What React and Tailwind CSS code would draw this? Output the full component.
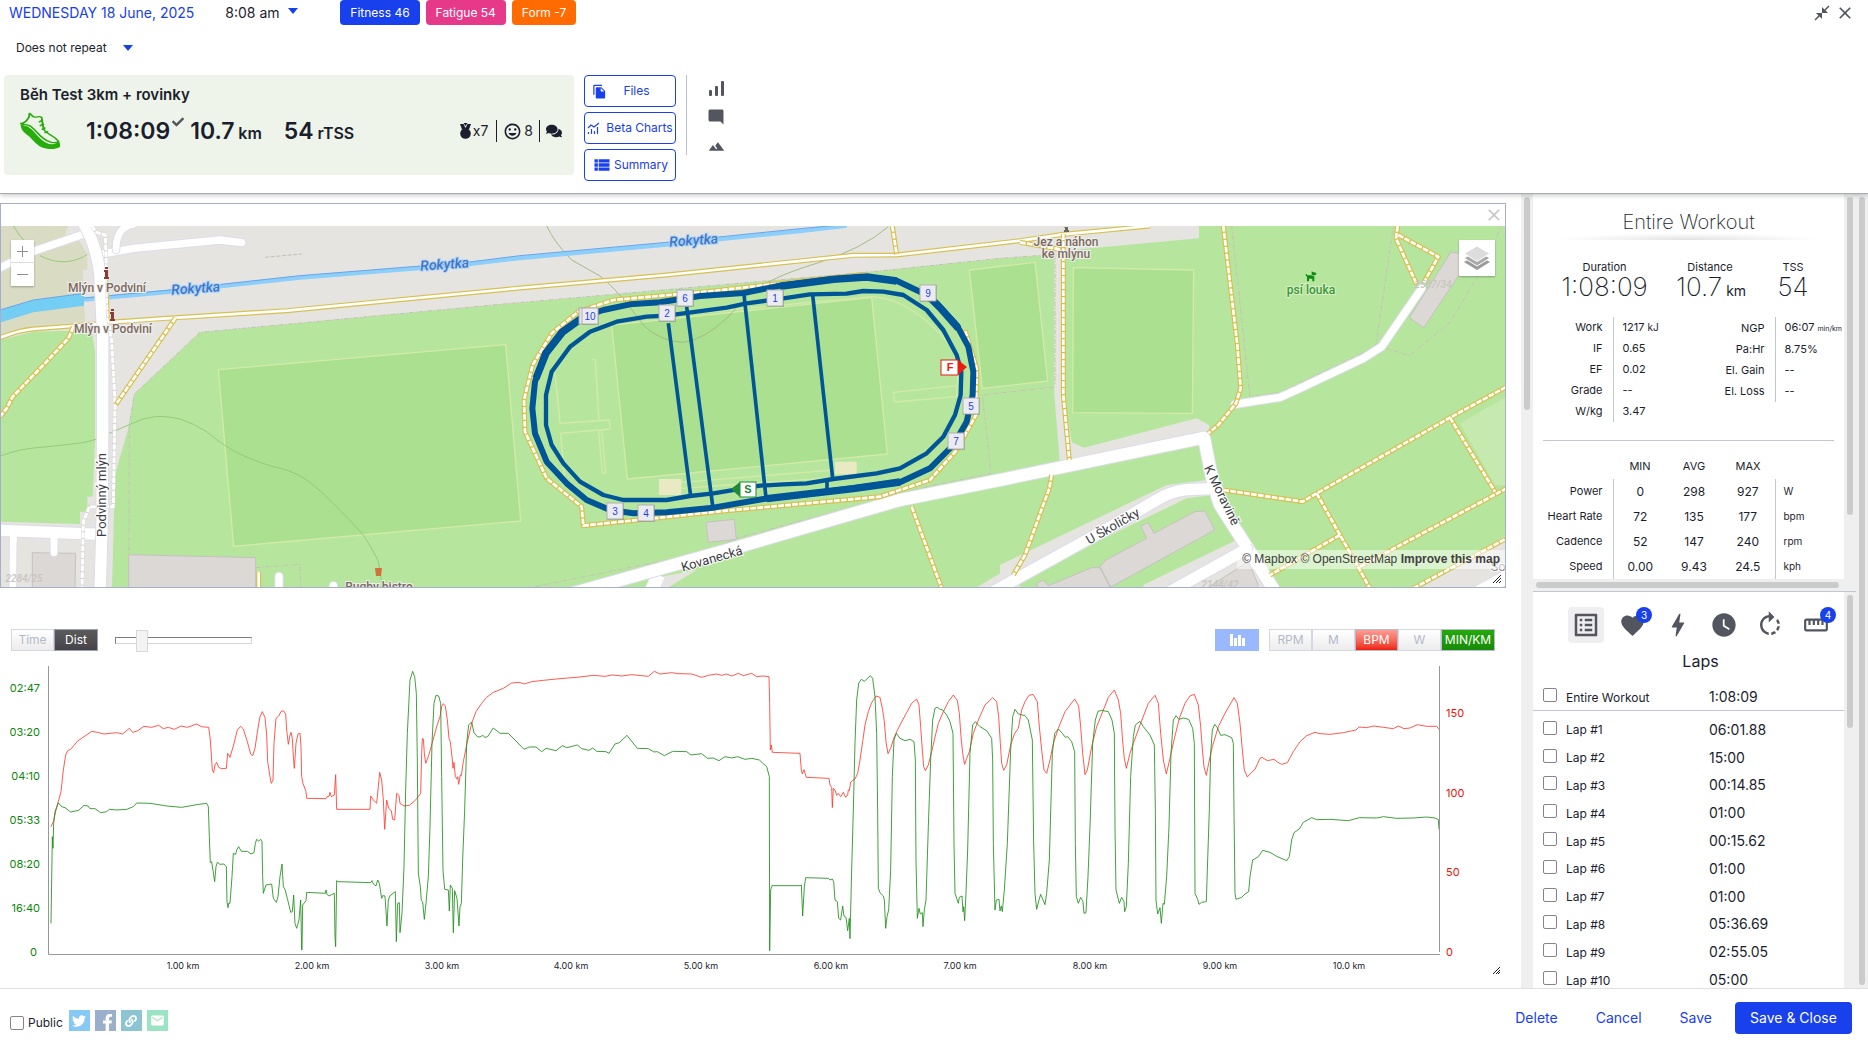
import {
  MdBolt,
  MdClose,
  MdCloseFullscreen,
  MdEmail,
  MdFavorite,
  MdFileCopy,
  MdFilterHdr,
  MdListAlt,
  MdModeComment,
  MdOutlineMood,
  MdRotateRight,
  MdStraighten,
  MdViewList,
  MdWatchLater,
} from "react-icons/md"
import { FaCheck, FaComments, FaDog, FaFacebookF, FaLink, FaTwitter } from "react-icons/fa"

const laps = [
  ["Lap #1", "06:01.88"],
  ["Lap #2", "15:00"],
  ["Lap #3", "00:14.85"],
  ["Lap #4", "01:00"],
  ["Lap #5", "00:15.62"],
  ["Lap #6", "01:00"],
  ["Lap #7", "01:00"],
  ["Lap #8", "05:36.69"],
  ["Lap #9", "02:55.05"],
  ["Lap #10", "05:00"],
]

const statsLeft = [
  ["Work", "1217", "kJ"],
  ["IF", "0.65"],
  ["EF", "0.02"],
  ["Grade", "--"],
  ["W/kg", "3.47"],
]

const statsRight = [
  ["NGP", "06:07", "min/km"],
  ["Pa:Hr", "8.75%"],
  ["El. Gain", "--"],
  ["El. Loss", "--"],
]

const minMax = [
  ["Power", "0", "298", "927", "W"],
  ["Heart Rate", "72", "135", "177", "bpm"],
  ["Cadence", "52", "147", "240", "rpm"],
  ["Speed", "0.00", "9.43", "24.5", "kph"],
]

// samples are in thirds of a pixel, one chunk per window of the recording
const heartRate = [
  [0, "153,650 160,635 168,600 175,575 183,545 190,480 197,435 203,422 212,418 232,394 255,378 275,364 292,367 312,372 350,368 368,372 388,355 398,367 412,363 432,349 455,352 476,346 490,356 505,352 523,358 543,348 562,352 590,342 604,350 626,352 631,390 637,480 641,488 645,465 650,457 656,472 664,476 679,475 683,430 690,442 700,408 712,360 722,349 730,357 742,395 752,432 758,437 765,415 773,360 780,320 787,305 795,322 800,375 803,455 810,500 814,520 819,510 822,400 828,325 836,318 843,305 850,302 857,312 860,360 865,403 869,380 873,367 877,385 880,440 883,475 888,400 894,372 900,370 903,410 905,500 909,520 918,545 920,565 978,566 981,560 987,559 990,547 994,560 1003,555 1007,494 1010,598 1110,598 1112,558 1120,570 1130,580 1135,530 1139,487 1145,510 1150,570 1154,658 1160,570 1166,595 1174,602 1178,628 1184,630 1190,550 1197,556 1200,580 1212,588 1228,586 1245,572"],
  [1200, "55,560 62,550 65,430 67,385 70,387 73,430 77,460 85,440 95,405 110,350 120,320 125,290 130,281 136,288 142,330 147,385 151,395 157,450 159,475 162,457 166,500 171,507 173,500 176,523 181,495 184,497 190,455 200,405 215,340 228,305 245,280 260,262 280,247 310,235 335,219 358,217 373,222 395,215 430,211 470,207 540,201 580,196 615,199 637,195 665,198 695,194 745,199 763,184 780,192 815,188 835,191 875,192 905,202 925,196 950,192 965,196 980,192 995,198 1015,190 1030,197 1055,190 1070,200 1090,198 1107,200 1109,280 1111,420 1114,405 1117,427 1200,430 1204,480 1207,492 1212,479"],
  [2400, "19,502 87,505 90,525 95,532 97,593 100,535 105,540 110,556 115,550 122,560 130,547 137,562 143,555 145,540 148,542 152,516 165,507 173,490 180,450 188,395 195,345 205,305 215,278 228,258 240,262 248,300 253,335 258,395 264,431 272,415 283,380 300,345 335,280 350,267 357,285 362,350 367,420 371,470 376,482 385,465 395,425 403,390 415,340 430,305 445,275 460,255 472,272 478,310 483,380 488,430 494,463 500,445 508,425 520,370 535,330 555,285 578,263 590,275 596,320 601,400 605,460 611,481 620,465 632,405 643,372 655,355 665,300 675,275 687,256 699,253 712,275 718,350 725,420 732,480 740,490 750,450 760,400 775,355 795,305 824,267 836,288 842,350 848,430 855,494 862,480 875,410 890,350 910,300 925,262 943,240 955,270 962,310 968,395 973,445 979,475 990,430 1000,400 1020,345 1045,280 1065,256 1075,280 1082,370 1090,450 1099,492 1110,445 1122,390 1138,325 1155,280 1170,258"],
  [3540, "43,253 55,285 62,350 68,430 72,470 79,496 86,460 97,410 115,350 135,310 162,263 172,280 180,340 187,420 193,480 202,501 212,490 225,478 240,445 246,442 262,452 282,448 292,456 305,463 322,458 340,425 360,395 380,377 405,367 420,371 450,373 490,368 528,360 537,351 560,353 582,348 610,352 640,356 655,348 672,356 690,354 712,344 740,349 770,349 777,358"],
]

const pace = [
  [0, "153,940 157,680 159,715 161,640 165,605 175,578 185,590 195,593 212,606 236,601 252,586 264,588 270,596 285,596 302,608 320,605 328,598 350,600 380,598 400,590 410,579 450,580 500,588 545,592 590,584 620,580 625,590 628,680 631,758 635,755 644,815 648,770 652,757 660,763 672,762 679,770 681,875 684,893 686,880 690,880 696,800 700,730 707,733 710,720 716,710 724,724 742,724 753,732 762,728 766,700 770,688 776,693 782,688 786,695 788,800 790,850 798,825 815,822 820,865 829,877 834,860 840,800 846,762 850,830 855,838 862,865 872,907 877,905 881,855 885,940 890,955 897,930 902,870 905,1020 906,1020 908,885 918,872 920,847 976,850 978,840 981,853 987,858 1003,850 1005,980 1007,1010 1010,812 1014,815 1112,818 1116,812 1120,822 1128,828 1133,810 1138,820 1145,865 1148,857 1155,858 1161,948 1165,870 1170,857 1186,845 1189,995 1193,880 1198,878 1200,968 1206,910 1212,770 1217,540 1222,370 1230,210"],
  [1200, "38,184 44,200 49,250 52,450 55,790 61,830 64,872 68,875 73,928 78,880 85,800 90,650 96,400 102,280 108,256 116,258 122,280 125,500 129,780 134,838 145,840 148,903 151,825 157,835 160,968 164,842 171,865 177,948 180,890 184,880 188,750 194,600 200,400 206,345 215,336 222,368 232,380 240,381 248,376 255,382 263,380 280,354 300,370 325,370 345,390 372,418 388,411 408,411 425,425 438,415 468,422 487,407 500,413 532,405 545,416 567,421 578,414 590,424 618,425 627,430 645,402 658,398 681,376 712,415 745,416 762,426 772,425 793,437 818,424 860,425 873,435 905,431 922,445 940,444 957,452 975,440 995,444 1013,440 1035,448 1055,445 1078,450 1100,470 1108,500 1109,1022 1112,840 1116,827 1200,827 1204,825 1208,918 1213,830"],
  [2400, "17,803 85,805 90,810 97,807 101,815 105,870 112,875 116,925 122,930 128,888 132,918 138,922 143,962 148,925 150,986 155,780 160,600 165,400 170,270 176,220 184,208 193,214 211,197 218,205 225,260 230,370 233,600 235,835 240,848 250,858 253,870 257,955 261,920 266,900 272,780 277,500 282,390 289,370 300,385 315,392 330,388 342,395 346,450 348,750 352,925 357,895 361,912 367,908 369,950 373,900 378,870 385,650 392,450 398,330 405,295 412,291 418,297 428,300 440,315 450,335 459,370 462,700 465,850 475,880 478,862 486,858 489,905 491,890 494,932 498,850 503,720 510,430 518,345 526,335 540,350 560,362 575,385 578,450 580,700 585,900 589,870 597,868 600,903 604,888 607,905 613,840 622,700 632,420 638,320 645,298 655,312 675,317 685,330 697,390 701,700 705,850 710,898 717,870 722,853 735,884 740,850 748,750 757,430 764,370 775,357 787,370 796,382 803,380 815,395 824,425 826,700 829,860 835,880 842,862 849,875 852,910 858,908 864,800 870,650 878,400 886,330 894,304 905,301 925,305 936,330 943,370 945,650 948,840 958,880 965,862 972,875 974,905 979,890 985,760 992,500 1000,380 1006,345 1020,334 1030,350 1050,375 1063,405 1066,600 1068,870 1073,912 1080,893 1084,940 1089,880 1093,883 1100,800 1107,650 1113,430 1120,330 1128,317 1137,328 1150,324 1166,328 1178,355 1183,400 1185,830"],
  [3540, "45,850 53,868 57,883 65,877 77,875 79,875 83,750 88,600 92,430 97,360 104,343 112,353 122,376 135,374 155,383 160,400 162,600 165,850 168,868 185,862 195,852 206,845 210,800 218,750 235,740 248,721 270,727 290,739 320,752 328,740 335,690 342,668 358,657 370,637 395,623 410,629 450,628 505,632 538,623 590,624 610,620 650,625 700,624 740,621 765,624 775,629 777,658"],
]

function join(chunks) {
  return chunks
    .map(([dx, pts]) =>
      pts
        .split(" ")
        .map((p) => {
          const [x, y] = p.split(",")
          return `${Number(x) + dx},${y}`
        })
        .join(" "),
    )
    .join(" ")
}

const kmTicks = [
  [183, "1.00 km"],
  [312, "2.00 km"],
  [442, "3.00 km"],
  [571, "4.00 km"],
  [701, "5.00 km"],
  [831, "6.00 km"],
  [960, "7.00 km"],
  [1090, "8.00 km"],
  [1220, "9.00 km"],
  [1349, "10.0 km"],
]
const paceTicks = ["02:47", "03:20", "04:10", "05:33", "08:20", "16:40", "0"]
const bpmTicks = [
  [717, "150"],
  [797, "100"],
  [876, "50"],
  [956, "0"],
]

const markers = [
  ["10", 590, 316],
  ["6", 685, 298],
  ["2", 667, 313],
  ["1", 775, 298],
  ["9", 928, 293],
  ["5", 971, 406],
  ["7", 956, 441],
  ["3", 615, 511],
  ["4", 646, 513],
]

export default function App() {
  return (
    <div className="flex h-screen min-h-[600px] flex-col overflow-hidden bg-white font-['Inter',sans-serif] text-[#1b1e2e]">
      <Header />
      <div className="flex min-h-0 flex-1">
        <main className="min-w-0 flex-1 overflow-hidden pt-[9px]">
          <MapPanel />
          <ChartPanel />
        </main>
        <VScroll className="bg-[#efefef]" thumb="h-[213px]" />
        <Sidebar />
        <VScroll className="bg-[#efefef]" thumb="h-[788px]" />
      </div>
      <Footer />
    </div>
  )
}

function VScroll({ className = "", thumb }) {
  return (
    <div className={`w-3 shrink-0 overflow-hidden px-[3px] pt-[3px] ${className}`}>
      <div className={`w-1.5 rounded-full bg-[#cbcbcb] ${thumb}`} />
    </div>
  )
}

function Caret() {
  return <span className="border-x-[5px] border-t-[6px] border-x-transparent border-t-[#1840ed]" />
}

function Header() {
  return (
    <header className="relative z-10 h-[194px] shrink-0 border-b border-[#a9abb3] bg-white shadow-[0_1px_5px_rgba(0,0,0,0.25)]">
      <div className="flex h-[25px] items-center">
        <button className="ml-[9px] text-sm text-[#1840ed]">WEDNESDAY 18 June, 2025</button>
        <label className="ml-[31px] flex items-center">
          <select aria-label="Start time" className="appearance-none text-sm">
            <option>8:08 am</option>
          </select>
          <span className="-mt-1 ml-2 flex"><Caret /></span>
        </label>
        <div className="ml-[42px] flex gap-1.5 text-xs text-white">
          <span className="flex h-[25px] items-center rounded bg-[#1840ed] px-2.5">Fitness 46</span>
          <span className="flex h-[25px] items-center rounded bg-[#e6398a] px-2.5">Fatigue 54</span>
          <span className="flex h-[25px] items-center rounded bg-[#ff6b00] px-2.5">Form -7</span>
        </div>
        <div className="ml-auto flex items-center gap-1 pr-[13px] text-[#53565e]">
          <button aria-label="Shrink"><MdCloseFullscreen size={18} /></button>
          <button aria-label="Close"><MdClose size={20} /></button>
        </div>
      </div>
      <label className="ml-4 mt-[13px] flex h-5 w-fit items-center">
        <select aria-label="Repeat" className="appearance-none text-xs">
          <option>Does not repeat</option>
        </select>
        <span className="ml-4 flex"><Caret /></span>
      </label>

      <div className="mt-[17px] flex pl-1">
        <section className="h-[100px] w-[570px] rounded bg-[#eef4e9] px-4 pt-2.5">
          <h1 className="text-[15px] leading-5 font-semibold">Běh Test 3km + rovinky</h1>
          <div className="mt-[7px] flex items-center">
            <Shoe />
            <span className="ml-[26px] text-[23px] font-semibold">1:08:09</span>
            <FaCheck size={12} className="mb-[18px] ml-0.5 text-[#53565e]" />
            <span className="ml-1.5 text-[23px] font-semibold">
              10.7 <span className="-ml-0.5 text-base">km</span>
            </span>
            <span className="ml-[22px] text-[23px] font-semibold">
              54 <span className="-ml-0.5 text-base">rTSS</span>
            </span>
            <div className="-mr-2 ml-auto flex h-[22px] items-center text-sm">
              <Medal />
              <span className="ml-0.5 pr-2">x7</span>
              <span className="flex h-[22px] items-center gap-0.5 border-x border-[#1b1e2e] px-1.5">
                <MdOutlineMood size={19} /> 8
              </span>
              <FaComments size={16} className="mr-1 ml-1.5" />
            </div>
          </div>
        </section>
        <div className="ml-2.5 flex flex-col gap-[5px] text-[#1840ed]">
          <HeaderButton icon={<MdFileCopy size={15} />} gap="gap-4 pr-[18px]">Files</HeaderButton>
          <HeaderButton icon={<BetaChartIcon />} gap="gap-1.5">Beta Charts</HeaderButton>
          <HeaderButton icon={<MdViewList size={20} />} gap="gap-0.5">Summary</HeaderButton>
        </div>
        <div className="ml-2.5 flex h-20 flex-col items-center justify-between border-l border-[#b9bed0] pt-1.5 pl-5 text-[#53565e]">
          <button aria-label="Chart">
            <svg width="15" height="15" viewBox="0 0 15 15" fill="currentColor">
              <rect x="0" y="9" width="3" height="6" rx="1" />
              <rect x="6" y="5" width="3" height="10" rx="1" />
              <rect x="12" y="0" width="3" height="15" rx="1" />
            </svg>
          </button>
          <button aria-label="Comments"><MdModeComment size={18} /></button>
          <button aria-label="Map"><MdFilterHdr size={17} /></button>
        </div>
      </div>
    </header>
  )
}

function HeaderButton({ icon, gap, children }) {
  return (
    <button className={`flex h-8 w-[92px] items-center justify-center rounded border border-[#1840ed] text-xs whitespace-nowrap ${gap}`}>
      {icon}
      {children}
    </button>
  )
}

function BetaChartIcon() {
  return (
    <svg width="13" height="13" viewBox="0 0 13 13" fill="none" stroke="#1840ed" className="shrink-0">
      <path d="M1 6 4 3 7 5 12 1M1.500 12V10M4.500 12V7M7.500 12V9M10.500 12V5" strokeWidth="1.200" />
    </svg>
  )
}

function Medal() {
  return (
    <svg width="11" height="16" viewBox="0 0 11 16" fill="currentColor">
      <path d="M0 1H3.500L5.500 5 7.500 1H11L9 6.500H2Z" />
      <path d="M3.500 0H7.500L5.500 3Z" />
      <circle cx="5.500" cy="10.500" r="5.300" />
    </svg>
  )
}

function Shoe() {
  return (
    <svg width="40" height="38" viewBox="0 0 85 112" preserveAspectRatio="none" className="shrink-0">
      <path
        d="M2 34C9 34 16 24 19 15C21 9 18 4 21 4C25 8 26 14 31 15C36 16 41 10 46 16C48 30 47 42 52 54C58 66 76 72 82 88C72 94 58 88 48 76C36 62 30 48 20 40C14 36 6 38 2 34Z"
        fill="none"
        stroke="#27ad0b"
        strokeWidth="4"
      />
      <path d="M2 32C0 44 4 56 14 66C26 78 34 96 46 104C56 110 74 112 84 104C87 98 86 92 82 88C72 100 58 96 48 84C34 68 28 52 18 44C10 40 4 40 2 32Z" fill="#27ad0b" />
      <path d="M40 30 47 24M42 41 51 35M46 52 54 46M52 62 60 57" stroke="#27ad0b" strokeWidth="4" />
    </svg>
  )
}

/* ---------- map ---------- */

function Trail({ d, solid }) {
  return (
    <>
      <path d={d} stroke="#d8c04e" strokeWidth={15} />
      <path d={d} stroke="#fff" strokeWidth={8} strokeDasharray={solid ? undefined : "17 4"} />
    </>
  )
}

function Road({ d, w }) {
  return (
    <>
      <path d={d} stroke="#dcdde9" strokeWidth={w + 6} strokeLinecap="round" />
      <path d={d} stroke="#fff" strokeWidth={w} strokeLinecap="round" />
    </>
  )
}

function Boundary({ d }) {
  return <path d={d} stroke="#c9bfb8" strokeWidth={3} strokeDasharray="14 5 4 5" />
}

function Building({ points }) {
  return <polygon points={points} fill="#dcd8d5" stroke="#c6c1be" strokeWidth={3} />
}

function Field({ points }) {
  return <polygon points={points} fill="#aae08f" stroke="#d3eaa8" strokeWidth={4} />
}

function MapPanel() {
  return (
    <section className="relative mr-[15px] border border-[#a5b0c8]">
      <div className="flex h-[22px] items-center justify-end pr-px">
        <button aria-label="Hide map" className="text-[#c6c6c6]"><MdClose size={20} /></button>
      </div>
      <MapDrawing />
      <div className="absolute top-9 left-2.5 flex w-[23px] flex-col bg-white text-[#8e8e8e] shadow-[0_1px_2px_rgba(0,0,0,0.3)]">
        <button aria-label="Zoom in" className="flex h-[23px] items-center justify-center border-b border-[#ddd]">
          <svg width="11" height="11" viewBox="0 0 11 11" stroke="currentColor"><path d="M5.500 0V11M0 5.500H11" /></svg>
        </button>
        <button aria-label="Zoom out" className="flex h-[23px] items-center justify-center">
          <svg width="11" height="11" viewBox="0 0 11 11" stroke="currentColor"><path d="M0 5.500H11" /></svg>
        </button>
      </div>
      <button aria-label="Layers" className="absolute top-9 right-2.5 flex size-9 items-center justify-center bg-white shadow-[0_1px_2px_rgba(0,0,0,0.3)]">
        <svg width="26" height="26" viewBox="0 0 26 26">
          <path d="M0 17 13 10 26 17 13 25Z" fill="#9a9a9a" />
          <path d="M0 13 13 6 26 13 13 21Z" fill="#a9a9a9" stroke="#fff" />
          <path d="M0 8.500 13 1 26 8.500 13 16.500Z" fill="#dcdcdc" stroke="#fff" />
        </svg>
      </button>
      <p className="absolute right-0 bottom-[18px] bg-white/50 px-[5px] font-['Liberation_Sans',sans-serif] text-xs leading-[19px] text-[#404040]">
        <a href="#mapbox">© Mapbox</a> <a href="#osm">© OpenStreetMap</a>{" "}
        <a href="#improve" className="font-bold">Improve this map</a>
      </p>
      <div className="absolute right-1 bottom-1"><Grip /></div>
    </section>
  )
}

function Grip() {
  return (
    <svg width="8" height="8" viewBox="0 0 8 8" stroke="#222" className="block">
      <path d="M0 8 8 0M3 8 8 3M6 8 8 6" />
    </svg>
  )
}

function MapDrawing() {
  return (
    <svg viewBox="1 226 1504 361" className="block w-full font-['Roboto',sans-serif]" fill="none">
      <rect x="0" y="220" width="1510" height="370" fill="#b6e69e" />
      <g transform="translate(0 195) scale(0.333333)" strokeLinejoin="round">
        {/* built-up ground and park */}
        <path
          d="M0 90H3597V130L3215 165 3165 178 3000 190 2600 232 2100 275 1500 328 600 412 403 597 385 700 345 840 336 1180H0Z"
          fill="#e5e4e1"
        />
        <path d="M0 90H205L195 120 240 140 262 180V225H248L255 380 100 395 0 425Z" fill="#d9dcc3" />
        <path d="M0 435 100 410 275 405 285 470V740L278 905H262V950H240V987L0 980Z" fill="#b6e69e" />
        <path d="M3163 178H3198L3192 600 3215 742 3252 758 3590 670 3627 690V730L3180 805 3163 600Z" fill="#e5e4e1" />
        <path d="M3000 1110 3500 870 3620 855 3640 900 3560 910 3000 1180Z" fill="#e5e4e1" />
        <path d="M2925 1180 3060 1100V1180ZM3430 1170 3720 1030 3800 1180H3430ZM4260 1180 4520 1020V1180ZM2000 1180 2090 1125 1960 1150 1930 1180Z" fill="#e5e4e1" />
        <path d="M4380 685 4520 605V870H4485Z" fill="#c5e9ae" />

        {/* playing fields */}
        <Field points="655,524 1517,449 1562,978 701,1054" />
        <Field points="1835,390 2615,308 2662,777 1882,852" />
        <Field points="2908,225 3105,202 3143,558 2947,580" />
        <Field points="3220,218 3581,225 3577,655 3218,653" />
        <g stroke="#d3eaa8" strokeWidth="4">
          <path d="M1665 535 1680 685 1828 675 1830 702 1682 715 1695 860M1775 493H1786L1797 678M1805 705 1817 833 1807 835 1796 708M2680 592 2870 572V605L2684 621ZM2025 360 2615 305M2615 305C2720 310 2800 390 2850 450C2868 480 2876 530 2872 570M2045 862 2500 825M2045 880 2500 848" />
        </g>
        <path d="M1977 852H2044V900H1977ZM2505 800H2570V838H2505Z" fill="#e9e9c4" />

        {/* contour lines */}
        <path
          d="M0 783Q60 762 110 758T250 743L288 733M328 715 390 688Q430 668 470 664 510 664 540 672 580 685 620 710 680 760 730 782 800 812 840 820 890 830 940 870 1000 920 1090 1020 1125 1075 1135 1100L1145 1160M40 93Q60 125 75 140M120 182Q160 203 200 200 240 195 262 178"
          stroke="#93cb7a"
          strokeWidth="3"
        />
        <path
          d="M1640 93Q1665 145 1715 195L1800 243Q1850 280 1930 390 1980 440 2050 442 2110 435 2180 370L2240 305Q2300 250 2450 205 2590 160 2665 95"
          stroke="#a3bb85"
          strokeWidth="3"
        />

        {/* river */}
        <path d="M0 345 100 315 252 295V332L100 352 0 383Z" fill="#74cdf2" />
        <path d="M0 345 100 315 252 295" stroke="#6ba3e8" strokeWidth="3" />
        <path d="M252 314 500 291 900 248 1400 208 1560 189 2000 149 2400 108 2540 92" stroke="#8ccffa" strokeWidth="13" />
        <path d="M252 309 500 286 900 242 1400 202 1560 182 2000 142 2400 101 2520 90" stroke="#6ba3e8" strokeWidth="3" />

        {/* parcel boundaries */}
        <Boundary d="M3165 178 3000 190 2600 232 2100 275 1500 328 600 412 403 597 388 690 387 1079M767 1118 900 1108 902 1180" />
        <Boundary d="M3160 576 2947 600 2973 835 2800 870 2210 1030 2100 1075 1600 1176M3165 180V570M3695 93 3750 605 3840 592 4127 455 4180 93M4127 450 4228 482 4350 383 4430 250 4505 93" />
        <path d="M795 187 905 177" stroke="#c3c0a8" strokeWidth="3" strokeDasharray="12 5" />

        {/* buildings */}
        <Building points="97,1073 227,1075 225,1180 97,1180" />
        <Building points="386,1079 767,1088 767,1180 386,1180" />
        <Building points="2118,982 2203,973 2209,1033 2125,1042" />
        <Building points="4352,172 4380,175 4380,235 4271,398 4228,368" />
        <Building points="3318,1095 3440,1030 3422,993 3445,983 3462,1015 3585,950 3615,948 3644,1005 3332,1176 3300,1115" />
        <Building points="3110,1165 3130,1155 3145,1172 3275,1118 3300,1118 3332,1180 3115,1180" />
        <Building points="3620,1180 3745,1100 3775,1170 3770,1180" />

        {/* streets */}
        <Road w={22} d="M-20 228 105 167 250 118" />
        <Road w={22} d="M300 178 400 160 660 135 725 143" />
        <Road w={20} d="M348 165Q348 95 400 88" />
        <Road w={20} d="M40 1012 38 1190" />
        <Road w={20} d="M162 1030V1073" />
        <Road w={34} d="M-20 1005 300 1018" />
        <path d="M40 1005V1040M162 1010V1050" stroke="#fff" strokeWidth="20" />
        <Road w={22} d="M837 1144V1190M1000 1172V1190" />
        <path d="M1955 1185 1975 1140" stroke="#fff" strokeWidth="40" />
        <Road w={36} d="M1700 1200 2200 1060 2500 973 2700 915 3000 855 3612 728 3640 870 3660 930 3740 1055 3825 1190" />
        <Road w={34} d="M3650 880 3560 884Q3510 890 3470 915L3350 985 2980 1190" />
        <Road w={34} d="M3740 1062 3510 1190" />
        <Road w={22} d="M3705 628 3840 607 3900 580 4090 490 4145 455 4265 280" />
        <Road w={40} d="M4440 1190 4540 1135" />
        <Road w={34} d="M248 80Q290 150 300 240L308 420V700L306 1000 300 1190" />
        <path d="M3612 728 3640 870 3660 930 3740 1055" stroke="#fff" strokeWidth="34" />
        <path d="M275 93 290 112 316 120 320 250 325 370 335 440 345 620 340 935H268L250 980 246 1180" stroke="#d4d2d4" strokeWidth="11" />
        <path d="M275 93 290 112 316 120 320 250 325 370 335 440 345 620 340 935H268L250 980 246 1180" stroke="#fff" strokeWidth="9" strokeDasharray="17 3" />

        {/* footpaths */}
        <Trail solid d="M0 428Q60 405 100 402L215 393 288 387M328 382 500 370 860 347 1560 279 2000 240 2560 181 2690 180 3060 137 3190 118 3450 93" />
        <Trail d="M220 395 205 430 130 510 38 605 20 640 0 665" />
        <Trail d="M527 368 348 628" />
        <Trail d="M3060 142 3190 165" />
        <Trail d="M2677 93 2690 178" />
        <Trail d="M2600 238 2370 262 2120 290 1840 315 1735 350 1655 415 1598 510 1572 615 1575 710 1640 850 1745 935 1750 992 2180 947 2640 905 2790 855 2870 765 2928 660 2930 520 2895 405" />
        <Trail d="M2735 935 2825 1180" />
        <Trail d="M3190 118V600L3208 795" />
        <Trail d="M3155 840 3148 880 3075 1080 3040 1140" />
        <Trail d="M3670 93 3712 450 3722 580 3708 625 3655 690 3625 715" />
        <Trail d="M4193 93 4188 130 4250 268M4195 120 4315 185 4272 262" />
        <Trail d="M3670 885 3908 920 3950 895 4350 668 4520 575M3950 895 4020 1020 4110 1180M4350 668 4485 890M4080 1115 4520 880M4020 1020 3810 1140M4240 1180 4520 1030" />
        <Trail solid d="M776 1130V1180" />
        <path d="M323 255 328 378" stroke="#d8c04e" strokeWidth="3" />

        {/* recorded track */}
        <g stroke="#005596">
          <path
            d="M2230 294 2350 270 2500 252 2600 246 2690 257 2760 290 2810 325 2870 390 2905 455 2920 530 2918 600 2900 680 2860 750 2790 820 2700 862 2560 880 2400 900 2290 912 2140 938 2000 952 1900 955 1830 945 1760 915 1700 865 1640 800 1605 715 1597 640 1605 560 1635 475 1685 410 1750 365 1810 345 1890 328 1980 322 2100 303Z"
            strokeWidth="18"
          />
          <path
            d="M1940 365 2000 362 2090 350 2180 338 2240 325 2350 310 2430 298 2540 296 2590 288 2650 290 2710 300 2780 345 2830 405 2870 480 2884 530 2882 600 2865 660 2830 725 2780 775 2700 820 2630 835 2500 852 2420 865 2350 868 2280 872 2140 895 2070 903 2000 915 1870 915 1810 900 1740 860 1690 805 1655 750 1638 690V600L1655 530 1710 455 1770 410 1850 380Z"
            strokeWidth="13"
          />
          <path d="M2340 274 2500 253 2600 246 2690 258M1608 550 1638 475 1688 411 1750 366M2790 308 2820 338 2875 400M2700 861 2560 881 2300 911" strokeWidth="22" />
          <path d="M2005 385 2072 903M2060 335 2138 932M2232 298 2298 908M2438 300 2498 850M2481 855V888" strokeWidth="11" />
        </g>
      </g>

      {/* labels */}
      <g textAnchor="middle" fontSize="12" fontWeight="500" fill="#7a6a60" stroke="#f1efec" strokeWidth="2" style={{ paintOrder: "stroke" }}>
        <text x="107" y="292">Mlýn v Podviní</text>
        <text x="113" y="333">Mlýn v Podviní</text>
        <text x="1066" y="246">Jez a náhon</text>
        <text x="1066" y="258">ke mlýnu</text>
        <text x="379" y="591">Rugby bistro</text>
        <text x="1311" y="294" fill="#3d9637" stroke="#d6efc8">psí louka</text>
        <g fill="#c9c4bf" stroke="none" fontSize="10" fontStyle="italic">
          <text x="24" y="582">2284/25</text>
          <text x="1433" y="288">2587/34</text>
          <text x="1220" y="588">2144/42</text>
        </g>
      </g>
      <g textAnchor="middle" fontSize="14" fontWeight="500" fontStyle="italic" fill="#4573c4" stroke="#a9d6fa" strokeWidth="2" style={{ paintOrder: "stroke" }}>
        <text transform="translate(196 293) rotate(-4)">Rokytka</text>
        <text transform="translate(445 269) rotate(-4)">Rokytka</text>
        <text transform="translate(694 245) rotate(-4)">Rokytka</text>
      </g>
      <g textAnchor="middle" fontSize="13" fill="#3c3c46" stroke="#fff" strokeWidth="2" style={{ paintOrder: "stroke" }}>
        <text transform="translate(106 495) rotate(-90)">Podvinný mlýn</text>
        <text transform="translate(713 563) rotate(-16)">Kovanecká</text>
        <text transform="translate(1115 530) rotate(-30)">U Školičky</text>
        <text transform="translate(1218 497) rotate(64)">K Moravině</text>
        <text x="1498" y="571" fill="#8b8b90">So</text>
      </g>
      <g fill="#8c3a36">
        <path d="M104 270H108V277H109V279H104V277H105V272H104ZM105 267H108V269H105Z" />
        <path d="M110 312H114V319H115V321H110V319H111V314H110ZM111 309H114V311H111Z" />
      </g>
      <path d="M1064 227H1068V230H1069V232H1064V230H1065V228Z" fill="#6e6460" />
      <path d="M375 568H382L381 576H376Z" fill="#d2703c" />
      <FaDog x="1305" y="270" size={12} color="#0d8a15" />

      {/* kilometre markers */}
      <g textAnchor="middle" fontSize="10" className="font-['Liberation_Sans',sans-serif]">
        <rect x="579" y="308" width="16" height="16" fill="#e6e6ea" stroke="#a9a9a9" />
        {markers.map(([label, x, y]) => (
          <g key={label}>
            <rect x={x - 8} y={y - 8} width="17" height="17" fill="#00000033" />
            <rect x={x - 8} y={y - 8} width="16" height="16" fill="#ececf0" stroke="#aeaeb4" />
            <text x={x} y={y + 4} fill="#1d3ff0">{label}</text>
          </g>
        ))}
      </g>
      <g textAnchor="middle" fontSize="11" fontWeight="700" className="font-['Liberation_Sans',sans-serif]">
        <path d="M731 489 740 482V497Z" fill="#1f8a35" />
        <rect x="740" y="482" width="16" height="15" fill="#fff" stroke="#1f8a35" />
        <text x="748" y="493" fill="#1f8a35">S</text>
        <path d="M967 367 958 360V375Z" fill="#ea1c0d" />
        <rect x="941" y="360" width="17" height="15" fill="#fff" stroke="#ea1c0d" />
        <text x="950" y="371" fill="#ea1c0d">F</text>
      </g>
    </svg>
  )
}

/* ---------- chart ---------- */

function ChartPanel() {
  return (
    <section className="pt-[41px]">
      <div className="flex h-[22px] items-center pr-[26px] pl-[11px] text-xs">
        <div className="flex">
          <Toggle className="w-[43px] border-[#d5d8e4] bg-linear-to-b from-white to-[#ececec] text-[#b4b9cb]">Time</Toggle>
          <Toggle className="w-11 border-[#9aa1b4] bg-linear-to-b from-[#5b5b5b] to-[#454349] text-white">Dist</Toggle>
        </div>
        <input
          type="range"
          aria-label="Smoothing"
          defaultValue="16"
          className="ml-[17px] h-[22px] w-[137px] appearance-none bg-transparent [&::-webkit-slider-runnable-track]:h-[7px] [&::-webkit-slider-runnable-track]:border [&::-webkit-slider-runnable-track]:border-[#d5d5dc] [&::-webkit-slider-runnable-track]:border-t-[#7c7a86] [&::-webkit-slider-runnable-track]:border-l-[#7c7a86] [&::-webkit-slider-thumb]:-mt-2 [&::-webkit-slider-thumb]:h-[22px] [&::-webkit-slider-thumb]:w-3 [&::-webkit-slider-thumb]:appearance-none [&::-webkit-slider-thumb]:border [&::-webkit-slider-thumb]:border-[#d8d8dc] [&::-webkit-slider-thumb]:bg-[#f3f3f4]"
        />
        <button aria-label="Bars" className="ml-auto flex h-[22px] w-11 items-center justify-center bg-[#9ab8ff]">
          <svg width="15" height="12" viewBox="0 0 15 12" fill="#fff">
            <path d="M0 0H3V12H0ZM4 4H7V12H4ZM8 1H11V12H8ZM12 4H15V12H12Z" />
          </svg>
        </button>
        <div className="ml-2.5 flex">
          <Toggle className="w-[43px] border-[#d5d8e4] bg-linear-to-b from-white to-[#ececec] text-[#b4b9cb]">RPM</Toggle>
          <Toggle className="w-[43px] border-[#d5d8e4] bg-linear-to-b from-white to-[#ececec] text-[#b4b9cb]">M</Toggle>
          <Toggle className="w-[43px] border-[#b6bccb] bg-linear-to-b from-[#ff9c94] to-[#ec1a0a] text-white">BPM</Toggle>
          <Toggle className="w-[43px] border-[#d5d8e4] bg-linear-to-b from-white to-[#ececec] text-[#b4b9cb]">W</Toggle>
          <Toggle className="w-[54px] border-[#b6bccb] bg-linear-to-b from-[#25a80d] to-[#188a08] text-white">MIN/KM</Toggle>
        </div>
      </div>
      <svg viewBox="0 651 1521 337" className="block w-full" fill="none">
        <g transform="translate(0 610) scale(0.333333)" strokeWidth="3" strokeLinejoin="round">
          <polyline points={join(heartRate)} stroke="#ff3b30" strokeOpacity="0.85" />
          <polyline points={join(pace)} stroke="#1f8f1a" strokeOpacity="0.85" />
        </g>
        <path d="M48.500 666V954.500H1440M1439.500 666V952" stroke="#97979b" />
        <g fontSize="11" fill="#0b860b" textAnchor="end">
          {paceTicks.map((t, i) => (
            <text key={t} x={t === "0" ? 37 : 40} y={692 + i * 44}>{t}</text>
          ))}
        </g>
        <g fontSize="11" fill="#ea1408">
          {bpmTicks.map(([y, t]) => (
            <text key={t} x="1446" y={y}>{t}</text>
          ))}
        </g>
        <g fontSize="9" fill="#1b1e2e" textAnchor="middle">
          {kmTicks.map(([x, t]) => (
            <text key={t} x={x} y="969">{t}</text>
          ))}
        </g>
        <path d="M1493 974 1500 967M1496 974 1500 970M1498 974 1500 972" stroke="#222" />
      </svg>
    </section>
  )
}

function Toggle({ className = "", children }) {
  return <button className={`h-[22px] border ${className}`}>{children}</button>
}

/* ---------- sidebar ---------- */

function Sidebar() {
  return (
    <aside className="flex w-[323px] shrink-0 flex-col">
      <section className="flex h-[385px] shrink-0">
        <div className="min-w-0 flex-1 overflow-hidden"><Summary /></div>
        <VScroll className="bg-[#efefef]" thumb="h-[318px]" />
      </section>
      <div className="h-3 shrink-0 bg-[#efefef] pt-[3px] pl-[3px]">
        <div className="h-1.5 w-[303px] rounded-full bg-[#cbcbcb]" />
      </div>
      <section className="flex min-h-0 flex-1 overflow-hidden border-t border-[#c1c6d6]">
        <div className="flex min-w-0 flex-1 flex-col"><Laps /></div>
        <VScroll className="bg-[#efefef]" thumb="h-[133px]" />
      </section>
    </aside>
  )
}

function Summary() {
  return (
    <>
      <h2 className="h-[46px] bg-[radial-gradient(ellipse_at_bottom,#e2e2e4_0%,#fff_60%)] bg-[length:100%_8px] bg-bottom bg-no-repeat pt-[14px] text-center text-xl leading-7 font-extralight">
        Entire Workout
      </h2>
      <div className="mt-5 grid grid-cols-[143px_68px_98px] text-center text-[11px] leading-[14px]">
        <Headline label="Duration" value="1:08:09" />
        <Headline label="Distance" value="10.7" unit="km" />
        <Headline label="TSS" value="54" />
      </div>
      <div className="mt-4 flex text-[11px] leading-[21px]">
        <StatTable rows={statsLeft} labels="w-20" />
        <div className="ml-auto"><StatTable rows={statsRight} labels="w-20" /></div>
      </div>
      <hr className="mx-2.5 mt-[18px] border-[#c1c6d6]" />
      <table className="mt-[13px] w-full table-fixed text-xs">
        <thead>
          <tr className="h-[25px] text-[11px]">
            <th className="w-20" />
            <th className="w-[54px] font-normal">MIN</th>
            <th className="w-[54px] font-normal">AVG</th>
            <th className="w-[54px] font-normal">MAX</th>
            <th />
          </tr>
        </thead>
        <tbody>
          {minMax.map(([label, min, avg, max, unit]) => (
            <tr key={label} className="h-[25px] text-center">
              <th className="border-r border-[#c1c6d6] pr-2.5 text-right text-[11px] font-normal whitespace-nowrap">{label}</th>
              <td>{min}</td>
              <td>{avg}</td>
              <td>{max}</td>
              <td className="border-l border-[#c1c6d6] pl-2 text-left text-[10px]">{unit}</td>
            </tr>
          ))}
        </tbody>
      </table>
    </>
  )
}

function Headline({ label, value, unit }) {
  return (
    <div className="whitespace-nowrap">
      {label}
      <div className="text-[26px] leading-[26px] font-extralight">
        {value}
        {unit && <span className="ml-1 text-sm font-normal">{unit}</span>}
      </div>
    </div>
  )
}

function StatTable({ rows, labels }) {
  return (
    <table>
      <tbody>
        {rows.map(([label, value, unit]) => (
          <tr key={label}>
            <th className={`border-r border-[#c1c6d6] pr-2.5 text-right font-normal ${labels}`}>{label}</th>
            <td className="w-[69px] max-w-[69px] pl-[9px] whitespace-nowrap">
              {value} {unit && <span className={unit === "kJ" ? "text-[10px]" : "text-[7px]"}>{unit}</span>}
            </td>
          </tr>
        ))}
      </tbody>
    </table>
  )
}

function Tab({ label, active, count, children }) {
  return (
    <button aria-label={label} className={`relative flex size-9 items-center justify-center rounded ${active ? "bg-[#efeff1]" : ""}`}>
      {children}
      {count && (
        <span className="absolute -right-0.5 top-0 flex size-4 items-center justify-center rounded-full bg-[#1840ed] text-[10px] text-white">
          {count}
        </span>
      )}
    </button>
  )
}

function Laps() {
  return (
    <>
      <div className="mt-[15px] ml-[35px] flex gap-2.5 text-[#53565e]">
        <Tab label="Laps" active><MdListAlt size={30} /></Tab>
        <Tab label="Heart rate" count="3"><MdFavorite size={27} /></Tab>
        <Tab label="Power"><MdBolt size={30} /></Tab>
        <Tab label="Pace"><MdWatchLater size={28} /></Tab>
        <Tab label="Cadence"><MdRotateRight size={30} /></Tab>
        <Tab label="Distance" count="4"><MdStraighten size={26} /></Tab>
      </div>
      <h3 className="mt-1.5 pl-6 text-center text-base leading-6">Laps</h3>
      <div className="mt-[11px] flex h-[27px] shrink-0 border-b border-[#c1c6d6]">
        <LapRow name="Entire Workout" time="1:08:09" />
      </div>
      <div className="-mb-1.5 grid min-h-0 flex-1 auto-rows-fr pt-[5px]">
        {laps.map(([name, time]) => (
          <LapRow key={name} name={name} time={time} />
        ))}
      </div>
    </>
  )
}

function LapRow({ name, time }) {
  return (
    <label className="flex min-h-0 w-full items-center pl-2.5 text-xs">
      <input type="checkbox" className="mb-1 size-[14px] appearance-none rounded-[2px] border border-[#85838f] bg-white" />
      <span className="ml-[9px] w-[143px] pt-px">{name}</span>
      <span className="text-sm">{time}</span>
    </label>
  )
}

function Footer() {
  return (
    <footer className="z-10 flex h-14 shrink-0 items-center border-t border-[#dfdfe1] bg-white pt-0.5 pr-4 pl-2.5 text-sm text-[#1840ed]">
      <label className="flex items-center gap-1 pt-2.5 text-xs text-[#1b1e2e]">
        <input type="checkbox" className="size-[14px] appearance-none rounded-[2px] border border-[#85838f] bg-white" />
        Public
      </label>
      <div className="ml-1.5 flex gap-[5px] pt-1.5 text-white">
        <a href="#twitter" aria-label="Twitter" className="flex size-[21px] items-center justify-center bg-[#86c9f4]"><FaTwitter size={14} /></a>
        <a href="#facebook" aria-label="Facebook" className="flex size-[21px] items-end justify-end bg-[#9aafcb]"><FaFacebookF size={17} /></a>
        <a href="#link" aria-label="Link" className="flex size-[21px] items-center justify-center bg-[#8cc5d1]"><FaLink size={12} /></a>
        <a href="#mail" aria-label="Email" className="flex size-[21px] items-center justify-center bg-[#9ae3c3]"><MdEmail size={15} /></a>
      </div>
      <div className="ml-auto flex items-center">
        <button>Delete</button>
        <button className="ml-[38px]">Cancel</button>
        <button className="ml-[38px]">Save</button>
        <button className="ml-[23px] h-8 w-[117px] rounded bg-[#1840ed] text-white">Save &amp; Close</button>
      </div>
    </footer>
  )
}
